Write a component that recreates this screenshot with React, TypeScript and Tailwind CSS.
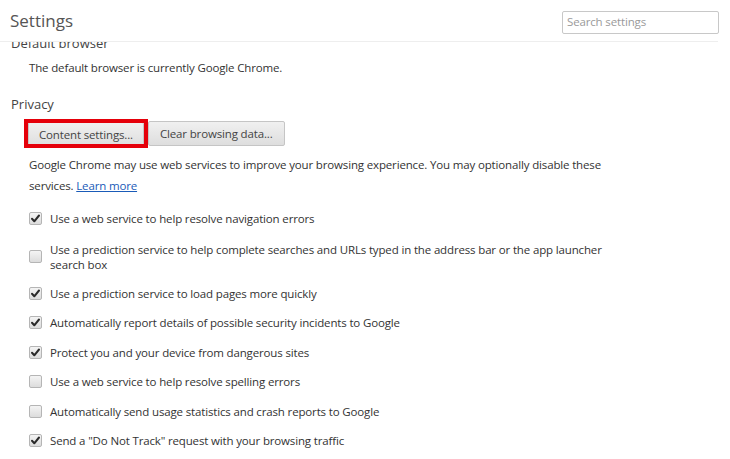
import React from "react";

const rows: { text: React.ReactNode; checked: boolean; mt: string }[] = [
  { text: "Use a web service to help resolve navigation errors", checked: true, mt: "mt-0" },
  {
    text: (
      <>
        Use a prediction service to help complete searches and URLs typed in the address bar or the app launcher
        <br />
        search box
      </>
    ),
    checked: false,
    mt: "mt-[16px]",
  },
  { text: "Use a prediction service to load pages more quickly", checked: true, mt: "mt-[14px]" },
  { text: "Automatically report details of possible security incidents to Google", checked: true, mt: "mt-[14.5px]" },
  { text: "Protect you and your device from dangerous sites", checked: true, mt: "mt-[14.5px]" },
  { text: "Use a web service to help resolve spelling errors", checked: false, mt: "mt-[14.5px]" },
  { text: "Automatically send usage statistics and crash reports to Google", checked: false, mt: "mt-[14.5px]" },
  { text: 'Send a "Do Not Track" request with your browsing traffic', checked: true, mt: "mt-[14.5px]" },
];

function Checkbox({ checked }: { checked: boolean }) {
  return (
    <div className="relative w-[13px] h-[13px] shrink-0 rounded-[2px] border border-[#b5b5b5] bg-gradient-to-b from-[#f4f4f4] to-[#dcdcdc]">
      {checked && (
        <svg viewBox="0 0 13 13" className="absolute -left-px -top-px w-[13px] h-[13px]">
          <path d="M3 6.8 L5.3 9.3 L10 3.5" fill="none" stroke="#2a2a2a" strokeWidth="2" strokeLinecap="round" strokeLinejoin="round" />
        </svg>
      )}
    </div>
  );
}

export default function App() {
  return (
    <div
      className="w-[730px] h-[459px] bg-white overflow-hidden relative text-[#333] tracking-[-0.15px]"
      style={{ fontFamily: '"Open Sans", "Noto Sans", sans-serif' }}
    >
      <div className="w-[718px] h-[42px] border-b border-[#eeeeee] flex items-center justify-between pl-[10px] bg-white relative z-10">
        <div className="text-[17px] text-[#555] leading-none mt-[-1px] tracking-normal">Settings</div>
        <div className="w-[157px] h-[23px] border border-[#c8c8c8] rounded-[2px] flex items-center pl-[4px] text-[11.5px] text-[#9a9a9a] mt-[3px] -mr-px">
          Search settings
        </div>
      </div>
      <div className="pl-[11px] overflow-hidden">
        <div className="text-[13px] leading-[18px] -mt-[8px] text-[#444] tracking-normal">Default browser</div>
        <div className="pl-[18px] mt-[7.5px] text-[11.5px] leading-[15px]">The default browser is currently Google Chrome.</div>
        <div className="text-[13px] leading-[18px] mt-[20.5px] text-[#444] tracking-normal">Privacy</div>
        <div className="pl-[17px] mt-[8px] flex gap-[4px]">
          <div className="relative">
            <button className="h-[25px] px-[10px] rounded-[2px] border border-[#c5c5c5] bg-gradient-to-b from-[#f0f0f0] to-[#dedede] text-[11.5px] text-[#444] leading-none">
              Content settings...
            </button>
            <div className="absolute left-[-4px] right-[-4px] top-[-2px] bottom-[-1px] border-[4px] border-[#e5000a]" />
          </div>
          <button className="h-[25px] px-[11px] rounded-[2px] border border-[#c5c5c5] bg-gradient-to-b from-[#f0f0f0] to-[#dedede] text-[11.5px] text-[#444] leading-none">
            Clear browsing data...
          </button>
        </div>
        <div className="pl-[18px] mt-[6.5px] text-[11.5px] leading-[21px] whitespace-nowrap">
          Google Chrome may use web services to improve your browsing experience. You may optionally disable these
          <br />
          services. <span className="text-[#1a5bb8] underline">Learn more</span>
        </div>
        <div className="pl-[18px] mt-[15px] flex flex-col">
          {rows.map((r, i) => (
            <div key={i} className={`flex items-center gap-[8px] ${r.mt}`}>
              <Checkbox checked={r.checked} />
              <div className="text-[11.5px] leading-[15px] whitespace-nowrap">{r.text}</div>
            </div>
          ))}
        </div>
      </div>
    </div>
  );
}
